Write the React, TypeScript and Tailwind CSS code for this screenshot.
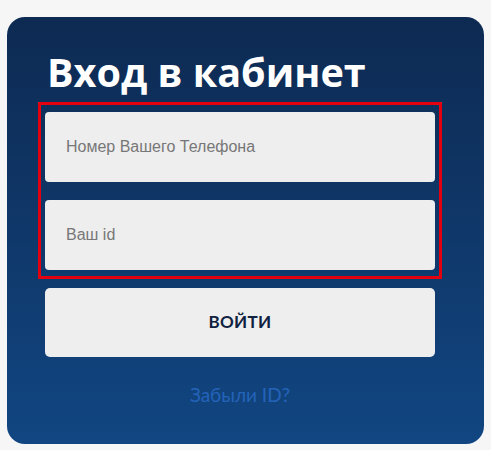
const inputClass =
  "h-[70px] w-[390px] rounded-[4px] bg-[#eeeeee] px-[21px] font-['Liberation_Sans',Arial,sans-serif] text-[16px] text-[#333] placeholder:text-[#777] outline-none";

export default function App() {
  return (
    <main className="min-h-screen bg-[#f6f6f6] pt-[17px] pl-[7px]">
      <div className="w-[477px] h-[427px] rounded-[18px] bg-gradient-to-b from-[#0d2a52] to-[#114682] pl-[31px] pt-[36px]">
        <h1 className="pl-[9px] font-['Open_Sans',sans-serif] text-[39.6px] leading-none font-bold text-white">
          Вход в кабинет
        </h1>
        <div className="mt-[9px] w-[404px] border-[3px] border-[#e3000f] px-[4px] pt-[7px] pb-[6px] flex flex-col gap-[18px]">
          <input className={inputClass} placeholder="Номер Вашего Телефона" />
          <input className={inputClass} placeholder="Ваш id" />
        </div>
        <button className="mt-[9px] ml-[7px] h-[69px] w-[390px] rounded-[5px] bg-[#eeeeee] font-['Lato',sans-serif] text-[17px] font-bold tracking-[0.3px] text-[#10223f]">
          ВОЙТИ
        </button>
        <div className="ml-[7px] mt-[24px] w-[390px] text-center">
          <a href="#" className="font-['Lato',sans-serif] text-[19px] font-normal text-[#2463ba]">
            Забыли ID?
          </a>
        </div>
      </div>
    </main>
  );
}
